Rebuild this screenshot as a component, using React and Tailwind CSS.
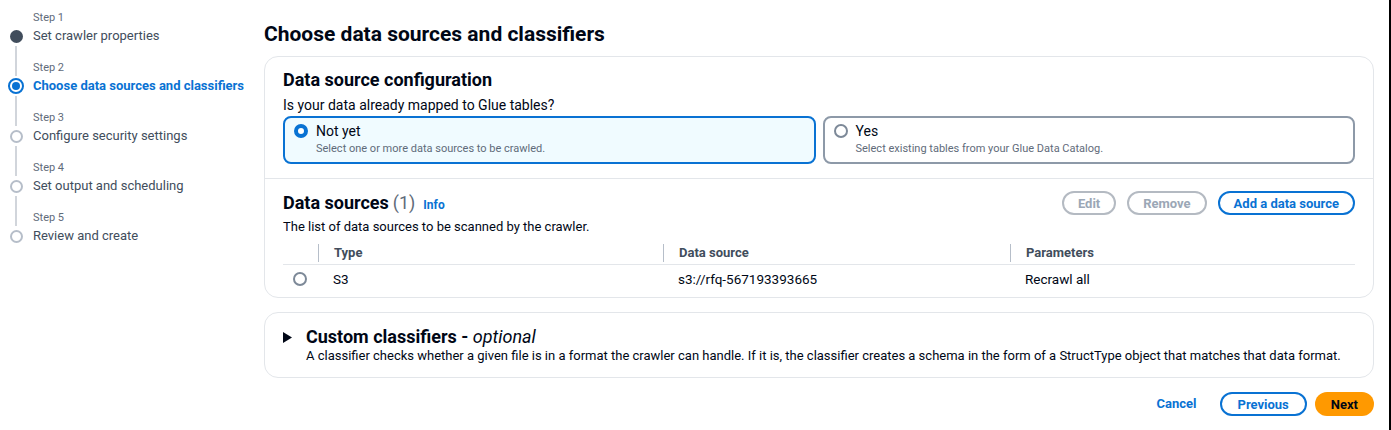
import React from 'react';

const steps = [
  { label: 'Step 1', title: 'Set crawler properties', state: 'done' },
  { label: 'Step 2', title: 'Choose data sources and classifiers', state: 'active' },
  { label: 'Step 3', title: 'Configure security settings', state: 'todo' },
  { label: 'Step 4', title: 'Set output and scheduling', state: 'todo' },
  { label: 'Step 5', title: 'Review and create', state: 'todo' },
];

const StepDot = ({ state }) => {
  if (state === 'done') {
    return <div className="w-[13px] h-[13px] rounded-full bg-[#414d5c]" />;
  }
  if (state === 'active') {
    return (
      <div className="w-[16px] h-[16px] rounded-full border-2 border-[#0972d3] flex items-center justify-center">
        <div className="w-[8px] h-[8px] rounded-full bg-[#0972d3]" />
      </div>
    );
  }
  return <div className="w-[13px] h-[13px] rounded-full border-2 border-[#b6bec9] bg-white" />;
};

const Steps = () => (
  <nav className="w-[264px] shrink-0 pl-2 pt-[10px]">
    {steps.map((s, i) => (
      <div key={s.label} className="flex">
        <div className="w-4 flex flex-col items-center">
          <div className={`w-[2px] h-4 ${i > 0 ? 'bg-[#d1d5db]' : ''}`} />
          <div className="h-5 flex items-center justify-center">
            <StepDot state={s.state} />
          </div>
          <div className={`w-[2px] h-[14px] ${i < steps.length - 1 ? 'bg-[#d1d5db]' : ''}`} />
        </div>
        <div className="ml-[9px]">
          <div className="text-[11px] leading-4 text-[#5f6b7a]">{s.label}</div>
          <div
            className={`text-[13px] leading-5 whitespace-nowrap ${
              s.state === 'active' ? 'text-[#0972d3] font-bold' : 'text-[#414d5c]'
            }`}
          >
            {s.title}
          </div>
        </div>
      </div>
    ))}
  </nav>
);

const Radio = ({ checked }) =>
  checked ? (
    <div className="w-[14px] h-[14px] rounded-full border-[4px] border-[#0972d3] bg-white shrink-0" />
  ) : (
    <div className="w-[14px] h-[14px] rounded-full border-2 border-[#7d8998] bg-white shrink-0" />
  );

const Tile = ({ checked, title, desc }) => (
  <div
    className={`rounded-lg border-2 pt-[3px] pb-[5px] pl-[9px] pr-3 ${
      checked ? 'border-[#0972d3] bg-[#f0fbff]' : 'border-[#8d99a8] bg-white'
    }`}
  >
    <div className="flex items-center h-5 gap-2">
      <Radio checked={checked} />
      <span className="text-[14px] text-[#000716]">{title}</span>
    </div>
    <div className="pl-[22px] text-[11px] leading-4 text-[#5f6b7a]">{desc}</div>
  </div>
);

const PillButton = ({ children, variant }) => {
  const styles = {
    disabled: 'border-[#b4bac2] text-[#9ba7b6]',
    normal: 'border-[#0972d3] text-[#0972d3]',
  };
  return (
    <button
      className={`h-6 rounded-full border-2 px-[14px] text-[13px] font-bold leading-none ${styles[variant]}`}
    >
      {children}
    </button>
  );
};

const Col = ({ children, sep, w }) => (
  <div className={`flex items-center ${w}`}>
    {sep && <div className="w-px h-[18px] bg-[#b6bec9]" />}
    <div className="pl-[15px]">{children}</div>
  </div>
);

export default function App() {
  return (
    <div
      className="w-[1391px] h-[430px] flex bg-white border-r-2 border-black text-[#000716]"
      style={{ fontFamily: 'Roboto, "Open Sans", sans-serif' }}
    >
      <Steps />
      <main className="flex-1 pr-[15px] pt-5">
        <h1 className="text-[21px] leading-7 font-bold mb-2">Choose data sources and classifiers</h1>

        <section className="rounded-[14px] border border-[#e3e6ea]">
          <div className="px-[18px] pt-3 pb-[14px] border-b border-[#e3e6ea]">
            <h2 className="text-[18px] leading-[22px] font-bold">Data source configuration</h2>
            <div className="mt-[4px] text-[14px] leading-5">Is your data already mapped to Glue tables?</div>
            <div className="mt-px grid grid-cols-2 gap-[7px]">
              <Tile checked title="Not yet" desc="Select one or more data sources to be crawled." />
              <Tile title="Yes" desc="Select existing tables from your Glue Data Catalog." />
            </div>
          </div>

          <div className="px-[18px] pt-3 pb-1">
            <div className="flex items-center justify-between">
              <div className="flex items-baseline">
                <h2 className="text-[18px] leading-[22px] font-bold">Data sources</h2>
                <span className="ml-[4px] text-[18px] leading-[22px] text-[#5f6b7a]">(1)</span>
                <span className="ml-[8px] text-[12px] font-bold text-[#0972d3]">Info</span>
              </div>
              <div className="flex gap-[11px]">
                <PillButton variant="disabled">Edit</PillButton>
                <PillButton variant="disabled">Remove</PillButton>
                <PillButton variant="normal">Add a data source</PillButton>
              </div>
            </div>
            <div className="mt-[2px] text-[13px] leading-5">The list of data sources to be scanned by the crawler.</div>

            <div className="mt-[6px]">
              <div className="flex h-[22px] items-start border-b border-[#e3e6ea] text-[13px] font-bold text-[#414d5c]">
                <div className="w-[35px]" />
                <Col sep w="w-[345px]">Type</Col>
                <Col sep w="w-[347px]">Data source</Col>
                <Col sep w="flex-1">Parameters</Col>
              </div>
              <div className="flex h-[28px] items-center text-[13.5px]">
                <div className="w-[35px] pl-[10px]">
                  <Radio />
                </div>
                <Col w="w-[345px]">S3</Col>
                <Col w="w-[347px]">s3://rfq-567193393665</Col>
                <Col w="flex-1">Recrawl all</Col>
              </div>
            </div>
          </div>
        </section>

        <section className="mt-[14px] rounded-[14px] border border-[#e3e6ea] px-[18px] pt-[13px] pb-[13px]">
          <div className="flex items-center h-[22px]">
            <svg width="9" height="11" viewBox="0 0 9 11" className="mr-[14px]">
              <path d="M0 0 L9 5.5 L0 11 Z" fill="#000716" />
            </svg>
            <h2 className="text-[18px] leading-[22px] font-bold">
              Custom classifiers - <i className="font-normal">optional</i>
            </h2>
          </div>
          <div className="pl-[23px] text-[13px] leading-4 whitespace-nowrap">
            A classifier checks whether a given file is in a format the crawler can handle. If it is, the classifier creates a schema in the form of a StructType object that matches that data format.
          </div>
        </section>

        <div className="mt-[14px] flex items-center justify-end">
          <button className="text-[13px] font-bold text-[#0972d3] mr-[23px]">Cancel</button>
          <button className="h-6 rounded-full border-2 border-[#0972d3] px-[16px] text-[13px] font-bold leading-none text-[#0972d3]">
            Previous
          </button>
          <button className="ml-2 h-6 rounded-full bg-[#ff9900] px-[16px] text-[13px] font-bold leading-none text-[#000716]">
            Next
          </button>
        </div>
      </main>
    </div>
  );
}
